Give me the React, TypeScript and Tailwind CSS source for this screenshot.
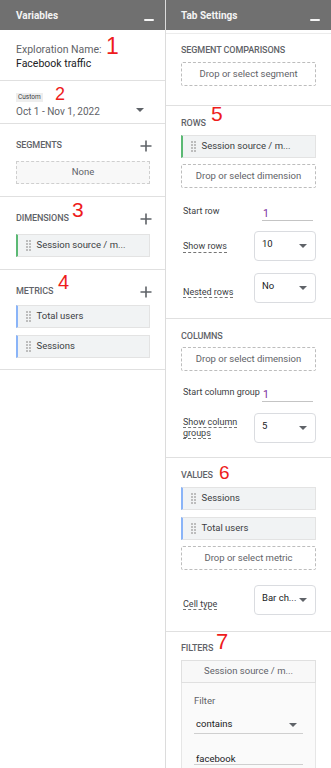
import React from 'react';

const font = "font-['Roboto','Liberation_Sans',sans-serif]";

function Minus() {
  return <span className="block w-[10px] h-[2px] bg-[#f5f5f5] rounded-[1px]" />;
}

function Plus() {
  return (
    <svg width="12" height="12" viewBox="0 0 12 12" className="text-[#5f6368]">
      <path d="M6 0.5v11M0.5 6h11" stroke="currentColor" strokeWidth="1.6" />
    </svg>
  );
}

function Caret() {
  return (
    <svg width="8" height="4" viewBox="0 0 8 4" className="shrink-0">
      <path d="M0 0h8L4 4z" fill="#5f6368" />
    </svg>
  );
}

function Grip() {
  return (
    <span className="grid grid-cols-2 gap-x-[1.5px] gap-y-[1.5px] mr-[6px]">
      {Array.from({ length: 8 }).map((_, i) => (
        <span key={i} className="w-[1.5px] h-[1.5px] bg-[#bdbdbd]" />
      ))}
    </span>
  );
}

function Chip({ label, color }: { label: string; color: 'green' | 'blue' }) {
  return (
    <div
      className={`flex items-center h-[23px] bg-[#f1f3f4] border border-[#e3e3e3] border-l-2 pl-[8px] text-[9.5px] text-[#3c4043] ${
        color === 'green' ? 'border-l-[#5bb974]' : 'border-l-[#8ab4f8]'
      }`}
    >
      <Grip />
      <span className="whitespace-nowrap">{label}</span>
    </div>
  );
}

function DropBox({ label }: { label: string }) {
  return (
    <div className="flex items-center justify-center h-[24px] border border-dashed border-[#bdbdbd] rounded-[2px] bg-white text-[9.5px] text-[#5f6368] whitespace-nowrap">
      {label}
    </div>
  );
}

function SectionTitle({ children, right }: { children: React.ReactNode; right?: React.ReactNode }) {
  return (
    <div className="flex items-center justify-between h-[10px]">
      <span className="text-[9px] font-medium text-[#5f6368] tracking-[-0.1px]">{children}</span>
      {right}
    </div>
  );
}

function Select({ value }: { value: string }) {
  return (
    <div className="flex items-center justify-between w-[62px] h-[30px] shrink-0 border border-[#dadce0] rounded-[4px] pl-[7px] pr-[8px] text-[9.5px] text-[#202124]">
      <span className="-mt-[3px] whitespace-nowrap">{value}</span>
      <Caret />
    </div>
  );
}

function DashedLabel({ children }: { children: React.ReactNode }) {
  return (
    <span className="text-[9px] leading-[12px] text-[#3c4043] border-b border-dashed border-[#757575] whitespace-nowrap">
      {children}
    </span>
  );
}

function InputRow({ label, value }: { label: string; value: string }) {
  return (
    <div className="flex items-start h-[22px] pl-[2px]">
      <span className="text-[9px] text-[#3c4043] mt-[5px] w-[79px] shrink-0 whitespace-nowrap">{label}</span>
      <div className="flex-1 border-b border-[#c4c4c4] h-[21px] pl-[1px] mr-[3px]">
        <span className="text-[10.5px] text-[#7b2d9b] leading-[20px]">{value}</span>
      </div>
    </div>
  );
}

function Annot({ n, className }: { n: string; className: string }) {
  return (
    <span className={`absolute leading-none text-[#ee1c1c] font-['Liberation_Sans',sans-serif] ${className}`}>
      {n}
    </span>
  );
}

export default function App() {
  return (
    <div className={`relative flex w-[331px] h-[768px] bg-white overflow-hidden ${font}`}>
      {/* Variables */}
      <div className="flex flex-col w-[166px] shrink-0 border-r border-[#dcdcdc]">
        <div className="flex shrink-0 items-center justify-between h-[30px] bg-[#707070] pl-[16px] pr-[11px]">
          <span className="text-[10px] font-bold text-[#f4f4f4]">Variables</span>
          <span className="mt-[9px]">
            <Minus />
          </span>
        </div>

        <div className="h-[51px] shrink-0 border-b border-[#e0e0e0] pl-[16px] pt-[13px]">
          <div className="text-[10.5px] leading-[14px] text-[#5f6368]">Exploration Name:</div>
          <div className="text-[10.5px] leading-[14px] text-[#202124]">Facebook traffic</div>
        </div>

        <div className="h-[43px] shrink-0 border-b border-[#e0e0e0] pl-[16px] pr-[21px] pt-[12px]">
          <div className="w-fit h-[9px] px-[2px] bg-[#eeeeee] text-[6.5px] leading-[9px] text-[#3c4043]">Custom</div>
          <div className="flex items-center justify-between mt-[4px] h-[12px]">
            <span className="text-[10px] leading-[12px] text-[#5f6368] whitespace-nowrap">Oct 1 - Nov 1, 2022</span>
            <span className="-mt-[4px]">
              <Caret />
            </span>
          </div>
        </div>

        <div className="h-[73px] shrink-0 border-b border-[#e0e0e0] pl-[16px] pr-[14px] pt-[17px]">
          <SectionTitle right={<span className="-mr-[1px]"><Plus /></span>}>SEGMENTS</SectionTitle>
          <div className="mt-[10px] mr-[1px] flex items-center justify-center h-[23px] border border-dashed border-[#cfcfcf] bg-[#f8f8f8] text-[9.5px] text-[#5f6368]">
            None
          </div>
        </div>

        <div className="h-[73px] shrink-0 border-b border-[#e0e0e0] pl-[16px] pr-[14px] pt-[17px]">
          <SectionTitle right={<span className="-mr-[1px]"><Plus /></span>}>DIMENSIONS</SectionTitle>
          <div className="mt-[10px] mr-[1px]">
            <Chip label="Session source / m..." color="green" />
          </div>
        </div>

        <div className="h-[100px] shrink-0 border-b border-[#e0e0e0] pl-[16px] pr-[14px] pt-[17px]">
          <SectionTitle right={<span className="-mr-[1px]"><Plus /></span>}>METRICS</SectionTitle>
          <div className="flex flex-col gap-[7px] mt-[8px] mr-[1px]">
            <Chip label="Total users" color="blue" />
            <Chip label="Sessions" color="blue" />
          </div>
        </div>
      </div>

      {/* Tab Settings */}
      <div className="flex flex-col flex-1 min-w-0">
        <div className="flex shrink-0 items-center justify-between h-[30px] bg-[#707070] pl-[15px] pr-[11px]">
          <span className="text-[10px] font-bold text-[#f4f4f4]">Tab Settings</span>
          <span className="mt-[9px]">
            <Minus />
          </span>
        </div>
        <div className="h-[4px] shrink-0 border-b border-[#ececec]" />

        <div className="h-[72px] shrink-0 border-b border-[#e0e0e0] px-[15px] pt-[12px]">
          <SectionTitle>SEGMENT COMPARISONS</SectionTitle>
          <div className="mt-[6px]">
            <DropBox label="Drop or select segment" />
          </div>
        </div>

        <div className="h-[213px] shrink-0 border-b border-[#e0e0e0] px-[15px] pt-[13px]">
          <SectionTitle>ROWS</SectionTitle>
          <div className="mt-[6px]">
            <Chip label="Session source / m..." color="green" />
          </div>
          <div className="mt-[6px]">
            <DropBox label="Drop or select dimension" />
          </div>
          <div className="mt-[12px]">
            <InputRow label="Start row" value="1" />
          </div>
          <div className="flex items-center justify-between mt-[9px] pl-[2px]">
            <DashedLabel>Show rows</DashedLabel>
            <Select value="10" />
          </div>
          <div className="flex items-center justify-between mt-[12px] pl-[2px]">
            <span className="mt-[3px]">
              <DashedLabel>Nested rows</DashedLabel>
            </span>
            <Select value="No" />
          </div>
        </div>

        <div className="h-[139px] shrink-0 border-b border-[#e0e0e0] px-[15px] pt-[13px]">
          <SectionTitle>COLUMNS</SectionTitle>
          <div className="mt-[5px]">
            <DropBox label="Drop or select dimension" />
          </div>
          <div className="mt-[10px]">
            <InputRow label="Start column group" value="1" />
          </div>
          <div className="flex items-center justify-between mt-[10px] pl-[2px]">
            <span className="w-[60px] text-[9px] leading-[11px] text-[#3c4043]">
              <span className="border-b border-dashed border-[#757575]">Show column</span>{' '}
              <span className="border-b border-dashed border-[#757575]">groups</span>
            </span>
            <Select value="5" />
          </div>
        </div>

        <div className="h-[174px] shrink-0 border-b border-[#e0e0e0] px-[15px] pt-[13px]">
          <SectionTitle>VALUES</SectionTitle>
          <div className="flex flex-col gap-[7px] mt-[6px]">
            <Chip label="Sessions" color="blue" />
            <Chip label="Total users" color="blue" />
          </div>
          <div className="mt-[6px]">
            <DropBox label="Drop or select metric" />
          </div>
          <div className="flex items-center justify-between mt-[15px] pl-[2px]">
            <span className="mt-[3px]">
              <DashedLabel>Cell type</DashedLabel>
            </span>
            <Select value="Bar ch..." />
          </div>
        </div>

        <div className="flex-1 px-[15px] pt-[12px]">
          <SectionTitle>FILTERS</SectionTitle>
          <div className="mt-[6px] flex items-center justify-center h-[23px] border border-[#e0e0e0] bg-[#f8f8f8] text-[9.5px] text-[#5f6368] whitespace-nowrap">
            Session source / m...
          </div>
          <div className="h-[100px] border-x border-[#e6e6e6] bg-[#fafafa] pl-[12px] pr-[12px] pt-[11px]">
            <div className="text-[9.5px] text-[#5f6368]">Filter</div>
            <div className="flex items-center justify-between mt-[8px] h-[18px] border-b border-[#cfcfcf] pl-[2px] pr-[6px]">
              <span className="text-[9.5px] text-[#202124] -mt-[2px]">contains</span>
              <Caret />
            </div>
            <div className="mt-[11px] h-[20px] border-b border-[#cfcfcf] pl-[2px]">
              <span className="text-[9.5px] text-[#202124]">facebook</span>
            </div>
          </div>
        </div>
      </div>

      {/* annotations */}
      <Annot n="1" className="left-[106px] top-[35px] text-[23px]" />
      <Annot n="2" className="left-[55px] top-[85px] text-[18px]" />
      <Annot n="3" className="left-[72px] top-[199px] text-[21px]" />
      <Annot n="4" className="left-[58px] top-[272px] text-[20px]" />
      <Annot n="5" className="left-[211px] top-[103px] text-[21px]" />
      <Annot n="6" className="left-[219px] top-[463px] text-[19px]" />
      <Annot n="7" className="left-[216px] top-[631px] text-[22px]" />
    </div>
  );
}
